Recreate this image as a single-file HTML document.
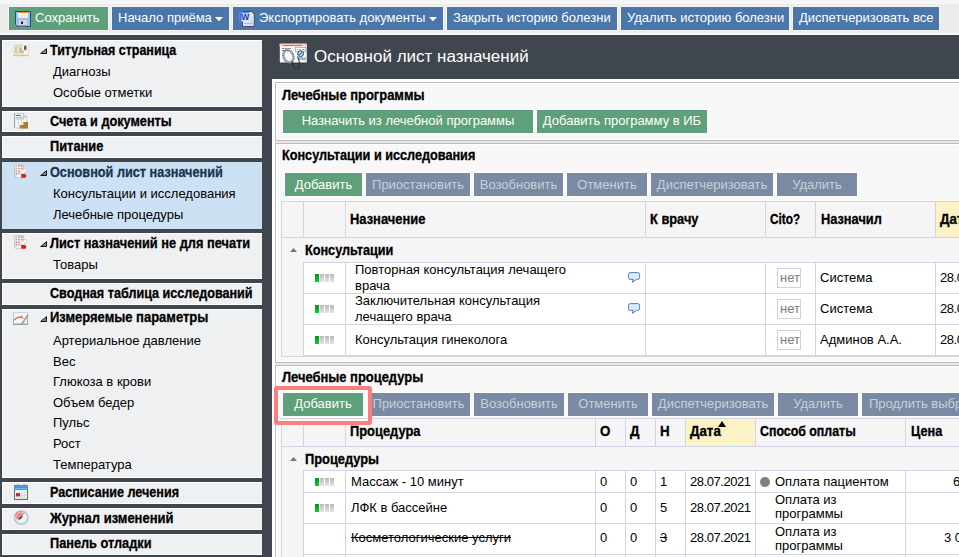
<!DOCTYPE html><html><head><meta charset="utf-8"><style>
html,body{margin:0;padding:0}
body{width:959px;height:557px;overflow:hidden;position:relative;background:#3f464e;font-family:"Liberation Sans",sans-serif}
.t{position:absolute;white-space:nowrap}
.b{position:absolute}
svg{position:absolute}
</style></head><body>
<div class="b" style="left:0px;top:0px;width:959px;height:35px;background:#ececec;"></div>
<div class="b" style="left:0px;top:0px;width:959px;height:4px;background:#f6f6f6;"></div>
<div class="b" style="left:0px;top:33px;width:959px;height:2px;background:#f7f7f7;"></div>
<div class="b" style="left:8px;top:6px;width:101px;height:25px;background:#f5f5f5;"></div>
<div class="b" style="left:9px;top:7px;width:99px;height:23px;background:#5da07a;"></div>
<div class="b" style="left:111px;top:6px;width:119px;height:25px;background:#f5f5f5;"></div>
<div class="b" style="left:112px;top:7px;width:117px;height:23px;background:#4a76aa;"></div>
<div class="b" style="left:232px;top:6px;width:212px;height:25px;background:#f5f5f5;"></div>
<div class="b" style="left:233px;top:7px;width:210px;height:23px;background:#4a76aa;"></div>
<div class="b" style="left:446px;top:6px;width:172px;height:25px;background:#f5f5f5;"></div>
<div class="b" style="left:447px;top:7px;width:170px;height:23px;background:#4a76aa;"></div>
<div class="b" style="left:620px;top:6px;width:170px;height:25px;background:#f5f5f5;"></div>
<div class="b" style="left:621px;top:7px;width:168px;height:23px;background:#4a76aa;"></div>
<div class="b" style="left:792px;top:6px;width:148px;height:25px;background:#f5f5f5;"></div>
<div class="b" style="left:793px;top:7px;width:146px;height:23px;background:#4a76aa;"></div>
<div class="t" style="left:35px;top:10px;font-size:13px;line-height:15px;font-weight:normal;color:#fff;">Сохранить</div>
<div class="t" style="left:118px;top:10px;font-size:13px;line-height:15px;font-weight:normal;color:#fff;">Начало приёма</div>
<div class="t" style="left:259px;top:10px;font-size:13px;line-height:15px;font-weight:normal;color:#fff;">Экспортировать документы</div>
<div class="t" style="left:453px;top:10px;font-size:13px;line-height:15px;font-weight:normal;color:#fff;">Закрыть историю болезни</div>
<div class="t" style="left:627px;top:10px;font-size:13px;line-height:15px;font-weight:normal;color:#fff;">Удалить историю болезни</div>
<div class="t" style="left:799px;top:10px;font-size:13px;line-height:15px;font-weight:normal;color:#fff;">Диспетчеризовать все</div>
<svg style="left:215px;top:17px" width="9" height="5"><path d="M0 0 L8 0 L4 4.2 Z" fill="#fff"/></svg>
<svg style="left:429px;top:17px" width="9" height="5"><path d="M0 0 L8 0 L4 4.2 Z" fill="#fff"/></svg>
<svg style="left:15px;top:11px" width="16" height="16" viewBox="0 0 16 16">
<path d="M0.5 0.5 H15.5 V15.5 H2.5 L0.5 13.5 Z" fill="#9fc0ea" stroke="#1f4d9c" stroke-width="1"/>
<rect x="3" y="1" width="10" height="6" fill="#ececec"/>
<rect x="3" y="1" width="10" height="1.2" fill="#f28c1c"/>
<rect x="3" y="2.2" width="10" height="1.5" fill="#fafafa"/>
<rect x="4" y="9" width="8" height="6.5" fill="#d8d8d8"/>
<rect x="4" y="14.5" width="8" height="1" fill="#555"/>
<rect x="6" y="10.5" width="2" height="2.5" fill="#222"/>
</svg>
<svg style="left:239px;top:11px" width="16" height="16" viewBox="0 0 16 16">
<defs><linearGradient id="wg" x1="0" y1="0" x2="1" y2="1"><stop offset="0" stop-color="#f4f7fd"/><stop offset="1" stop-color="#c9d6f0"/></linearGradient></defs>
<path d="M3.5 0.5 H12.5 L15.3 3.3 V15.5 H3.5 Z" fill="url(#wg)" stroke="#3c4660" stroke-width="0.9"/>
<rect x="5" y="12" width="8.5" height="0.8" fill="#9fb0d0"/>
<rect x="0.3" y="1" width="10" height="9.5" fill="#d4e0fa"/>
<rect x="0.3" y="1" width="2.2" height="9.5" fill="#3a6ee8"/>
<rect x="0.3" y="1" width="10" height="1.3" fill="#5a88f0"/>
<text x="6.3" y="9.3" font-size="8.5" font-weight="bold" text-anchor="middle" fill="#1a3aa8" font-family="Liberation Sans">W</text>
</svg>
<div class="b" style="left:2px;top:40px;width:260px;height:67px;background:#ffffff;"></div>
<div class="b" style="left:3px;top:41px;width:259px;height:65px;background:#eff0f2;"></div>
<div class="b" style="left:2px;top:111px;width:260px;height:21px;background:#ffffff;"></div>
<div class="b" style="left:3px;top:112px;width:259px;height:19px;background:#eff0f2;"></div>
<div class="b" style="left:2px;top:136px;width:260px;height:22px;background:#ffffff;"></div>
<div class="b" style="left:3px;top:137px;width:259px;height:20px;background:#eff0f2;"></div>
<div class="b" style="left:2px;top:162px;width:260px;height:67px;background:#cde1f5;"></div>
<div class="b" style="left:2px;top:233px;width:260px;height:46px;background:#ffffff;"></div>
<div class="b" style="left:3px;top:234px;width:259px;height:44px;background:#eff0f2;"></div>
<div class="b" style="left:2px;top:283px;width:260px;height:22px;background:#ffffff;"></div>
<div class="b" style="left:3px;top:284px;width:259px;height:20px;background:#eff0f2;"></div>
<div class="b" style="left:2px;top:309px;width:260px;height:169px;background:#ffffff;"></div>
<div class="b" style="left:3px;top:310px;width:259px;height:167px;background:#eff0f2;"></div>
<div class="b" style="left:2px;top:482px;width:260px;height:22px;background:#ffffff;"></div>
<div class="b" style="left:3px;top:483px;width:259px;height:20px;background:#eff0f2;"></div>
<div class="b" style="left:2px;top:508px;width:260px;height:22px;background:#ffffff;"></div>
<div class="b" style="left:3px;top:509px;width:259px;height:20px;background:#eff0f2;"></div>
<div class="b" style="left:2px;top:534px;width:260px;height:21px;background:#ffffff;"></div>
<div class="b" style="left:3px;top:535px;width:259px;height:19px;background:#eff0f2;"></div>
<div class="t" style="left:50px;top:43px;font-size:14px;line-height:15px;font-weight:bold;color:#000;transform:scaleX(0.8905);transform-origin:0 0;-webkit-text-stroke:0.3px #000;">Титульная страница</div>
<svg style="left:40px;top:48px" width="8" height="7"><path d="M6.5 0.7 L6.5 5.5 L0.7 5.5 Z" fill="#8a8a8a" stroke="#111" stroke-width="1" stroke-linejoin="round"/></svg>
<div class="t" style="left:53px;top:64px;font-size:13px;line-height:15px;font-weight:normal;color:#000;">Диагнозы</div>
<div class="t" style="left:53px;top:85px;font-size:13px;line-height:15px;font-weight:normal;color:#000;">Особые отметки</div>
<div class="t" style="left:50px;top:114px;font-size:14px;line-height:15px;font-weight:bold;color:#000;transform:scaleX(0.9065);transform-origin:0 0;-webkit-text-stroke:0.3px #000;">Счета и документы</div>
<div class="t" style="left:50px;top:139px;font-size:14px;line-height:15px;font-weight:bold;color:#000;transform:scaleX(0.9164);transform-origin:0 0;-webkit-text-stroke:0.3px #000;">Питание</div>
<div class="t" style="left:50px;top:165px;font-size:14px;line-height:15px;font-weight:bold;color:#1b3550;transform:scaleX(0.9063);transform-origin:0 0;-webkit-text-stroke:0.3px #1b3550;">Основной лист назначений</div>
<svg style="left:40px;top:170px" width="8" height="7"><path d="M6.5 0.7 L6.5 5.5 L0.7 5.5 Z" fill="#8a8a8a" stroke="#111" stroke-width="1" stroke-linejoin="round"/></svg>
<div class="t" style="left:53px;top:186px;font-size:13px;line-height:15px;font-weight:normal;color:#000;">Консультации и исследования</div>
<div class="t" style="left:53px;top:207px;font-size:13px;line-height:15px;font-weight:normal;color:#000;">Лечебные процедуры</div>
<div class="t" style="left:50px;top:236px;font-size:14px;line-height:15px;font-weight:bold;color:#000;transform:scaleX(0.9144);transform-origin:0 0;-webkit-text-stroke:0.3px #000;">Лист назначений не для печати</div>
<svg style="left:40px;top:241px" width="8" height="7"><path d="M6.5 0.7 L6.5 5.5 L0.7 5.5 Z" fill="#8a8a8a" stroke="#111" stroke-width="1" stroke-linejoin="round"/></svg>
<div class="t" style="left:53px;top:257px;font-size:13px;line-height:15px;font-weight:normal;color:#000;">Товары</div>
<div class="t" style="left:50px;top:286px;font-size:14px;line-height:15px;font-weight:bold;color:#000;transform:scaleX(0.9006);transform-origin:0 0;-webkit-text-stroke:0.3px #000;">Сводная таблица исследований</div>
<div class="t" style="left:50px;top:310px;font-size:14px;line-height:15px;font-weight:bold;color:#000;transform:scaleX(0.9266);transform-origin:0 0;-webkit-text-stroke:0.3px #000;">Измеряемые параметры</div>
<svg style="left:40px;top:316px" width="8" height="7"><path d="M6.5 0.7 L6.5 5.5 L0.7 5.5 Z" fill="#8a8a8a" stroke="#111" stroke-width="1" stroke-linejoin="round"/></svg>
<div class="t" style="left:53px;top:333px;font-size:13px;line-height:15px;font-weight:normal;color:#000;">Артериальное давление</div>
<div class="t" style="left:53px;top:354px;font-size:13px;line-height:15px;font-weight:normal;color:#000;">Вес</div>
<div class="t" style="left:53px;top:374px;font-size:13px;line-height:15px;font-weight:normal;color:#000;">Глюкоза в крови</div>
<div class="t" style="left:53px;top:395px;font-size:13px;line-height:15px;font-weight:normal;color:#000;">Объем бедер</div>
<div class="t" style="left:53px;top:415px;font-size:13px;line-height:15px;font-weight:normal;color:#000;">Пульс</div>
<div class="t" style="left:53px;top:436px;font-size:13px;line-height:15px;font-weight:normal;color:#000;">Рост</div>
<div class="t" style="left:53px;top:457px;font-size:13px;line-height:15px;font-weight:normal;color:#000;">Температура</div>
<div class="t" style="left:50px;top:485px;font-size:14px;line-height:15px;font-weight:bold;color:#000;transform:scaleX(0.8986);transform-origin:0 0;-webkit-text-stroke:0.3px #000;">Расписание лечения</div>
<div class="t" style="left:50px;top:511px;font-size:14px;line-height:15px;font-weight:bold;color:#000;transform:scaleX(0.9279);transform-origin:0 0;-webkit-text-stroke:0.3px #000;">Журнал изменений</div>
<div class="t" style="left:50px;top:536px;font-size:14px;line-height:15px;font-weight:bold;color:#000;transform:scaleX(0.9100);transform-origin:0 0;-webkit-text-stroke:0.3px #000;">Панель отладки</div>
<svg style="left:13px;top:44px" width="16" height="13" viewBox="0 0 16 13">
<rect x="0.3" y="0.5" width="15.4" height="11.5" fill="#efe3bf"/>
<rect x="0.3" y="11" width="15.4" height="1.2" fill="#cfc5a8"/>
<rect x="2" y="1.2" width="7" height="1" fill="#c5cdb0"/>
<rect x="2" y="3.5" width="2" height="1" fill="#9fb5ae"/><rect x="2" y="5.5" width="1.5" height="1" fill="#9fb5ae"/><rect x="2" y="7.5" width="2" height="1.2" fill="#9fb5ae"/>
<rect x="6.5" y="3.5" width="2" height="5.5" fill="#a9bdb3"/><rect x="8.5" y="7" width="2" height="2" fill="#a9bdb3"/>
<rect x="9.5" y="0" width="5.5" height="6.5" fill="#fbfbfb" stroke="#d0d0d0" stroke-width="0.5"/>
<rect x="11" y="1.5" width="2.5" height="4.5" rx="1" fill="#5a5a5a"/>
<rect x="11" y="7.5" width="4" height="2.5" fill="#fff6dc"/>
</svg>
<svg style="left:14px;top:113px" width="15" height="16" viewBox="0 0 15 16">
<path d="M0.5 0.5 H9.5 L12.5 3.5 V15 H0.5 Z" fill="#f2f7f7" stroke="#b9c6c6" stroke-width="0.8"/>
<rect x="0.2" y="0.3" width="0.9" height="14.5" fill="#8d9d9d"/>
<path d="M9.5 0.5 V3.5 H12.5" fill="none" stroke="#9aa" stroke-width="0.7"/>
<rect x="2" y="2" width="5" height="0.9" fill="#555"/>
<rect x="2" y="4.2" width="8.5" height="0.7" fill="#9aa"/><rect x="2" y="5.6" width="8.5" height="0.7" fill="#9aa"/>
<rect x="4" y="7" width="0.7" height="7" fill="#c3d0d0"/><rect x="7" y="7" width="0.7" height="7" fill="#c3d0d0"/>
<path d="M5.8 15.6 V12 H9.3 V9 H14 V15.6 Z" fill="#a97d30"/>
</svg>
<svg style="left:14px;top:164px" width="14" height="15" viewBox="0 0 14 15">
<rect x="0.5" y="0.3" width="9" height="13" rx="1.5" fill="#f2f2f2" stroke="#b8b8b8" stroke-width="0.7"/>
<g fill="#e88a7c"><circle cx="5" cy="2" r="0.95"/><circle cx="7.8" cy="2" r="0.95"/><circle cx="5" cy="4.6" r="0.95"/><circle cx="7.8" cy="4.6" r="0.95"/><circle cx="5" cy="7.2" r="0.95"/><circle cx="2.3" cy="7.2" r="0.95"/><circle cx="2.3" cy="9.8" r="0.95"/><circle cx="5" cy="9.8" r="0.95"/></g>
<g fill="#aab4c0"><circle cx="2.3" cy="2" r="0.8"/><circle cx="2.3" cy="4.6" r="0.8"/></g>
<path d="M6.8 10.5 L11.2 5.8" stroke="#b8b8b8" stroke-width="3.6" stroke-linecap="round"/>
<path d="M6.8 10.5 L11.2 5.8" stroke="#fafafa" stroke-width="2.6" stroke-linecap="round"/>
<rect x="1.8" y="10" width="10.4" height="3.8" rx="1.9" fill="#f6f6f6" stroke="#a8a8a8" stroke-width="0.5"/>
<path d="M7.2 10 H10.3 A1.9 1.9 0 0 1 10.3 13.8 H7.2 Z" fill="#d81e1a"/>
</svg>
<svg style="left:14px;top:235px" width="14" height="15" viewBox="0 0 14 15">
<rect x="0.5" y="0.3" width="9" height="13" rx="1.5" fill="#f2f2f2" stroke="#b8b8b8" stroke-width="0.7"/>
<g fill="#e88a7c"><circle cx="5" cy="2" r="0.95"/><circle cx="7.8" cy="2" r="0.95"/><circle cx="5" cy="4.6" r="0.95"/><circle cx="7.8" cy="4.6" r="0.95"/><circle cx="5" cy="7.2" r="0.95"/><circle cx="2.3" cy="7.2" r="0.95"/><circle cx="2.3" cy="9.8" r="0.95"/><circle cx="5" cy="9.8" r="0.95"/></g>
<g fill="#aab4c0"><circle cx="2.3" cy="2" r="0.8"/><circle cx="2.3" cy="4.6" r="0.8"/></g>
<path d="M6.8 10.5 L11.2 5.8" stroke="#b8b8b8" stroke-width="3.6" stroke-linecap="round"/>
<path d="M6.8 10.5 L11.2 5.8" stroke="#fafafa" stroke-width="2.6" stroke-linecap="round"/>
<rect x="1.8" y="10" width="10.4" height="3.8" rx="1.9" fill="#f6f6f6" stroke="#a8a8a8" stroke-width="0.5"/>
<path d="M7.2 10 H10.3 A1.9 1.9 0 0 1 10.3 13.8 H7.2 Z" fill="#d81e1a"/>
</svg>
<svg style="left:13px;top:312px" width="16" height="14" viewBox="0 0 16 14">
<defs><linearGradient id="cg" x1="0" y1="0" x2="0" y2="1"><stop offset="0" stop-color="#c9d6dc"/><stop offset="1" stop-color="#8fa2ac"/></linearGradient></defs>
<rect x="0" y="0" width="15" height="13" fill="url(#cg)"/>
<rect x="1" y="1" width="13" height="10.5" fill="#f2f6f7"/>
<path d="M1.5 8 L3 6.5 L5 5.2 L7 5.6 L8.5 4.2 L9.8 6.8" stroke="#f0623c" stroke-width="1.2" fill="none"/>
<path d="M8.5 12.5 L15 3" stroke="#8f949c" stroke-width="1.8"/>
<path d="M9 12 L14.2 4.3" stroke="#f0b0b0" stroke-width="0.6"/>
<circle cx="12.2" cy="8.3" r="0.8" fill="#f2d060"/>
</svg>
<svg style="left:14px;top:484px" width="15" height="16" viewBox="0 0 15 16">
<rect x="0.5" y="1.5" width="13" height="14" fill="#e8f3f3" stroke="#6d5853" stroke-width="0.9"/>
<rect x="0" y="1" width="14" height="5" fill="#3a9ae6"/>
<rect x="1" y="4" width="12" height="1" fill="#6cb8f0"/>
<rect x="3" y="0" width="1.6" height="3.5" rx="0.8" fill="#8a8a8a"/><rect x="9.5" y="0" width="1.6" height="3.5" rx="0.8" fill="#8a8a8a"/>
<g fill="#c9d5d5"><rect x="7" y="7" width="0.8" height="7.5"/><rect x="10.5" y="7" width="0.8" height="7.5"/><rect x="1.5" y="11" width="11" height="0.8"/><rect x="1.5" y="13.5" width="11" height="0.6"/></g>
<rect x="2" y="9" width="4" height="3.4" fill="#e02424"/>
</svg>
<svg style="left:13px;top:510px" width="17" height="16" viewBox="0 0 17 16">
<circle cx="8.2" cy="7.6" r="6.6" fill="#e9f2f6" stroke="#a4aeb6" stroke-width="1.6" stroke-dasharray="1.1 0.6"/>
<path d="M8.4 7.4 L3.2 9.6 A5.2 5.2 0 0 1 11.2 2.9 Z" fill="#f68484"/>
<circle cx="8.2" cy="7.6" r="5.4" fill="none" stroke="#d8e2e8" stroke-width="0.7"/>
<path d="M9.4 6.6 L5.6 9.6" stroke="#2e2e2e" stroke-width="1.3"/>
</svg>
<div class="t" style="left:314px;top:47px;font-size:17px;line-height:19px;font-weight:normal;color:#fff;">Основной лист назначений</div>
<svg style="left:279px;top:43px" width="30" height="28" viewBox="0 0 30 28">
<rect x="0.3" y="0.3" width="27.8" height="19.6" fill="#f6f8fa" stroke="#262626" stroke-width="0.6"/>
<rect x="0.6" y="0.6" width="27.2" height="2.7" fill="#fbcac3"/>
<rect x="4.3" y="2.1" width="18.7" height="0.9" fill="#a8705c"/>
<g fill="#555"><rect x="3.2" y="5.2" width="2" height="0.8"/><rect x="5.8" y="5.2" width="2" height="0.8"/><rect x="8.5" y="5.2" width="1.5" height="0.8"/><rect x="10.5" y="5.2" width="1.5" height="0.8"/><rect x="3.2" y="7.2" width="7" height="0.8"/></g>
<rect x="16.3" y="4.5" width="10.5" height="4" fill="#fff" stroke="#888" stroke-width="0.6"/>
<g fill="#666"><rect x="18" y="6.2" width="1.3" height="0.7"/><rect x="20.5" y="6.2" width="1.3" height="0.7"/><rect x="23" y="6.2" width="2.5" height="0.7"/></g>
<path d="M18.5 14 L27 14 L27 17.2 L18.5 17.2 Z" fill="#a9cbea"/>
<g fill="#4a86c4"><rect x="19" y="15.6" width="2" height="0.8"/><rect x="22" y="15" width="1.5" height="0.8"/><rect x="24" y="16" width="2" height="0.8"/></g>
<ellipse cx="9.4" cy="13.3" rx="4.8" ry="6.3" transform="rotate(-25 9.4 13.3)" fill="none" stroke="#7c8c96" stroke-width="2.4" stroke-dasharray="1.5 0.4"/>
<path d="M13 18.3 Q14.5 26.5 17.5 26 Q21 25 20.7 21.6 Q20.2 17 18.5 13.5" stroke="#2a2a2a" stroke-width="1" fill="none"/>
<circle cx="21.6" cy="10.6" r="2.9" fill="#d6e6f2" stroke="#333" stroke-width="1"/>
<path d="M20 11.8 L23.2 9.2" stroke="#2f6aa8" stroke-width="1.2"/>
</svg>
<div class="b" style="left:272px;top:79px;width:700px;height:500px;background:#ffffff;"></div>
<div class="b" style="left:275px;top:82px;width:700px;height:59px;background:#f8f8f8;border:1px solid #bcbcbc;box-sizing:border-box;box-shadow:inset 0 0 0 1px #fff;"></div>
<div class="b" style="left:275px;top:141px;width:700px;height:2px;background:#e9e9e9;"></div>
<div class="b" style="left:275px;top:143px;width:700px;height:220px;background:#f8f8f8;border:1px solid #bcbcbc;box-sizing:border-box;box-shadow:inset 0 0 0 1px #fff;"></div>
<div class="b" style="left:275px;top:363px;width:700px;height:2px;background:#e9e9e9;"></div>
<div class="b" style="left:275px;top:365px;width:700px;height:220px;background:#f8f8f8;border:1px solid #bcbcbc;box-sizing:border-box;box-shadow:inset 0 0 0 1px #fff;"></div>
<div class="t" style="left:282px;top:88px;font-size:14px;line-height:15px;font-weight:bold;color:#000;transform:scaleX(0.9252);transform-origin:0 0;-webkit-text-stroke:0.3px #000;">Лечебные программы</div>
<div class="b" style="left:283px;top:110px;width:250px;height:23px;background:#5da07a;box-shadow:0 0 0 1px #fff"></div>
<div class="t" style="left:283px;top:113px;width:250px;text-align:center;font-size:13px;line-height:15px;color:#fff">Назначить из лечебной программы</div>
<div class="b" style="left:537px;top:110px;width:170px;height:23px;background:#5da07a;box-shadow:0 0 0 1px #fff"></div>
<div class="t" style="left:537px;top:113px;width:170px;text-align:center;font-size:13px;line-height:15px;color:#fff">Добавить программу в ИБ</div>
<div class="t" style="left:282px;top:148px;font-size:14px;line-height:15px;font-weight:bold;color:#000;transform:scaleX(0.9049);transform-origin:0 0;-webkit-text-stroke:0.3px #000;">Консультации и исследования</div>
<div class="b" style="left:285px;top:173px;width:77px;height:23px;background:#5da07a;box-shadow:0 0 0 1px #fff"></div>
<div class="t" style="left:285px;top:177px;width:77px;text-align:center;font-size:13px;line-height:15px;color:#fff">Добавить</div>
<div class="b" style="left:366px;top:173px;width:104px;height:23px;background:#7a8aa2;box-shadow:0 0 0 1px #fff"></div>
<div class="t" style="left:366px;top:177px;width:104px;text-align:center;font-size:13px;line-height:15px;color:#c9cfd8">Приостановить</div>
<div class="b" style="left:474px;top:173px;width:89px;height:23px;background:#7a8aa2;box-shadow:0 0 0 1px #fff"></div>
<div class="t" style="left:474px;top:177px;width:89px;text-align:center;font-size:13px;line-height:15px;color:#c9cfd8">Возобновить</div>
<div class="b" style="left:567px;top:173px;width:80px;height:23px;background:#7a8aa2;box-shadow:0 0 0 1px #fff"></div>
<div class="t" style="left:567px;top:177px;width:80px;text-align:center;font-size:13px;line-height:15px;color:#c9cfd8">Отменить</div>
<div class="b" style="left:651px;top:173px;width:122px;height:23px;background:#7a8aa2;box-shadow:0 0 0 1px #fff"></div>
<div class="t" style="left:651px;top:177px;width:122px;text-align:center;font-size:13px;line-height:15px;color:#c9cfd8">Диспетчеризовать</div>
<div class="b" style="left:777px;top:173px;width:80px;height:23px;background:#7a8aa2;box-shadow:0 0 0 1px #fff"></div>
<div class="t" style="left:777px;top:177px;width:80px;text-align:center;font-size:13px;line-height:15px;color:#c9cfd8">Удалить</div>
<div class="b" style="left:281px;top:201px;width:700px;height:37px;background:#f5f5f5;border-top:1px solid #d2d5e3;border-bottom:1px solid #d2d5e3;border-left:1px solid #d2d5e3;box-sizing:border-box;"></div>
<div class="b" style="left:936px;top:202px;width:44px;height:35px;background:#fbf3c6;"></div>
<div class="b" style="left:303px;top:201px;width:1px;height:37px;background:#d2d5e3;"></div>
<div class="b" style="left:345px;top:201px;width:1px;height:37px;background:#d2d5e3;"></div>
<div class="b" style="left:645px;top:201px;width:1px;height:37px;background:#d2d5e3;"></div>
<div class="b" style="left:765px;top:201px;width:1px;height:37px;background:#d2d5e3;"></div>
<div class="b" style="left:815px;top:201px;width:1px;height:37px;background:#d2d5e3;"></div>
<div class="b" style="left:935px;top:201px;width:1px;height:37px;background:#d2d5e3;"></div>
<div class="t" style="left:350px;top:212px;font-size:14px;line-height:15px;font-weight:bold;color:#000;transform:scaleX(0.9231);transform-origin:0 0;-webkit-text-stroke:0.3px #000;">Назначение</div>
<div class="t" style="left:650px;top:212px;font-size:14px;line-height:15px;font-weight:bold;color:#000;transform:scaleX(0.9161);transform-origin:0 0;-webkit-text-stroke:0.3px #000;">К врачу</div>
<div class="t" style="left:770px;top:212px;font-size:14px;line-height:15px;font-weight:bold;color:#000;transform:scaleX(0.8416);transform-origin:0 0;-webkit-text-stroke:0.3px #000;">Cito?</div>
<div class="t" style="left:821px;top:212px;font-size:14px;line-height:15px;font-weight:bold;color:#000;transform:scaleX(0.9136);transform-origin:0 0;-webkit-text-stroke:0.3px #000;">Назначил</div>
<div class="t" style="left:940px;top:212px;font-size:14px;line-height:15px;font-weight:bold;color:#000;transform:scaleX(0.9500);transform-origin:0 0;-webkit-text-stroke:0.3px #000;">Дата</div>
<div class="b" style="left:281px;top:238px;width:700px;height:118px;background:#f5f5f5;border-left:1px solid #d2d5e3;box-sizing:border-box;"></div>
<svg style="left:290px;top:248px" width="7" height="4"><path d="M0 4 L3.5 0 L7 4 Z" fill="#777"/></svg>
<div class="t" style="left:305px;top:243px;font-size:14px;line-height:15px;font-weight:bold;color:#000;transform:scaleX(0.9040);transform-origin:0 0;-webkit-text-stroke:0.3px #000;">Консультации</div>
<div class="b" style="left:303px;top:262px;width:700px;height:94px;background:#ffffff;"></div>
<div class="b" style="left:303px;top:262px;width:700px;height:1px;background:#d2d5e3;"></div>
<div class="b" style="left:303px;top:293px;width:700px;height:1px;background:#d2d5e3;"></div>
<div class="b" style="left:303px;top:324px;width:700px;height:1px;background:#d2d5e3;"></div>
<div class="b" style="left:303px;top:355px;width:700px;height:1px;background:#d2d5e3;"></div>
<div class="b" style="left:281px;top:356px;width:700px;height:1px;background:#d2d5e3;"></div>
<div class="b" style="left:303px;top:262px;width:1px;height:94px;background:#d2d5e3;"></div>
<div class="b" style="left:345px;top:262px;width:1px;height:94px;background:#d2d5e3;"></div>
<div class="b" style="left:645px;top:262px;width:1px;height:94px;background:#d2d5e3;"></div>
<div class="b" style="left:765px;top:262px;width:1px;height:94px;background:#d2d5e3;"></div>
<div class="b" style="left:815px;top:262px;width:1px;height:94px;background:#d2d5e3;"></div>
<div class="b" style="left:935px;top:262px;width:1px;height:94px;background:#d2d5e3;"></div>
<div class="b" style="left:315px;top:274px;width:4px;height:8px;background:linear-gradient(#07901f,#00d430)"></div>
<div class="b" style="left:320px;top:274px;width:4px;height:8px;background:linear-gradient(#b9b9b9,#e4e4e4)"></div>
<div class="b" style="left:325px;top:274px;width:4px;height:8px;background:linear-gradient(#b9b9b9,#e4e4e4)"></div>
<div class="b" style="left:330px;top:274px;width:4px;height:8px;background:linear-gradient(#b9b9b9,#e4e4e4)"></div>
<div class="b" style="left:777px;top:268px;width:22px;height:18px;border:1px solid #d2d2d2;background:#fff"></div>
<div class="t" style="left:780px;top:270px;font-size:13px;line-height:15px;font-weight:normal;color:#7c7c7c;">нет</div>
<div class="t" style="left:940px;top:270px;font-size:13px;line-height:15px;font-weight:normal;color:#000;letter-spacing:-0.45px">28.07.2021</div>
<div class="b" style="left:315px;top:305px;width:4px;height:8px;background:linear-gradient(#07901f,#00d430)"></div>
<div class="b" style="left:320px;top:305px;width:4px;height:8px;background:linear-gradient(#b9b9b9,#e4e4e4)"></div>
<div class="b" style="left:325px;top:305px;width:4px;height:8px;background:linear-gradient(#b9b9b9,#e4e4e4)"></div>
<div class="b" style="left:330px;top:305px;width:4px;height:8px;background:linear-gradient(#b9b9b9,#e4e4e4)"></div>
<div class="b" style="left:777px;top:299px;width:22px;height:18px;border:1px solid #d2d2d2;background:#fff"></div>
<div class="t" style="left:780px;top:301px;font-size:13px;line-height:15px;font-weight:normal;color:#7c7c7c;">нет</div>
<div class="t" style="left:940px;top:301px;font-size:13px;line-height:15px;font-weight:normal;color:#000;letter-spacing:-0.45px">28.07.2021</div>
<div class="b" style="left:315px;top:336px;width:4px;height:8px;background:linear-gradient(#07901f,#00d430)"></div>
<div class="b" style="left:320px;top:336px;width:4px;height:8px;background:linear-gradient(#b9b9b9,#e4e4e4)"></div>
<div class="b" style="left:325px;top:336px;width:4px;height:8px;background:linear-gradient(#b9b9b9,#e4e4e4)"></div>
<div class="b" style="left:330px;top:336px;width:4px;height:8px;background:linear-gradient(#b9b9b9,#e4e4e4)"></div>
<div class="b" style="left:777px;top:330px;width:22px;height:18px;border:1px solid #d2d2d2;background:#fff"></div>
<div class="t" style="left:780px;top:332px;font-size:13px;line-height:15px;font-weight:normal;color:#7c7c7c;">нет</div>
<div class="t" style="left:940px;top:332px;font-size:13px;line-height:15px;font-weight:normal;color:#000;letter-spacing:-0.45px">28.07.2021</div>
<div class="t" style="left:355px;top:262px;font-size:13px;line-height:15px;font-weight:normal;color:#000;">Повторная консультация лечащего</div>
<div class="t" style="left:355px;top:278px;font-size:13px;line-height:15px;font-weight:normal;color:#000;">врача</div>
<div class="t" style="left:355px;top:293px;font-size:13px;line-height:15px;font-weight:normal;color:#000;">Заключительная консультация</div>
<div class="t" style="left:355px;top:309px;font-size:13px;line-height:15px;font-weight:normal;color:#000;">лечащего врача</div>
<div class="t" style="left:355px;top:332px;font-size:13px;line-height:15px;font-weight:normal;color:#000;">Консультация гинеколога</div>
<div class="t" style="left:820px;top:270px;font-size:13px;line-height:15px;font-weight:normal;color:#000;">Система</div>
<div class="t" style="left:820px;top:301px;font-size:13px;line-height:15px;font-weight:normal;color:#000;">Система</div>
<div class="t" style="left:820px;top:332px;font-size:13px;line-height:15px;font-weight:normal;color:#000;">Админов А.А.</div>
<svg style="left:628px;top:272px" width="13" height="12" viewBox="0 0 13 12"><path d="M2.2 0.6 H9.8 Q11.6 0.6 11.6 2.4 V5.6 Q11.6 7.4 9.8 7.4 H8.5 L4.3 10.3 L5.2 7.4 H2.2 Q0.5 7.4 0.5 5.6 V2.4 Q0.5 0.6 2.2 0.6 Z" fill="#dbe9fb" stroke="#4f80bd" stroke-width="1"/></svg>
<svg style="left:628px;top:303px" width="13" height="12" viewBox="0 0 13 12"><path d="M2.2 0.6 H9.8 Q11.6 0.6 11.6 2.4 V5.6 Q11.6 7.4 9.8 7.4 H8.5 L4.3 10.3 L5.2 7.4 H2.2 Q0.5 7.4 0.5 5.6 V2.4 Q0.5 0.6 2.2 0.6 Z" fill="#dbe9fb" stroke="#4f80bd" stroke-width="1"/></svg>
<div class="t" style="left:282px;top:370px;font-size:14px;line-height:15px;font-weight:bold;color:#000;transform:scaleX(0.9238);transform-origin:0 0;-webkit-text-stroke:0.3px #000;">Лечебные процедуры</div>
<div class="b" style="left:283px;top:393px;width:80px;height:23px;background:#5da07a;box-shadow:0 0 0 1px #fff"></div>
<div class="t" style="left:283px;top:396px;width:80px;text-align:center;font-size:13px;line-height:15px;color:#fff">Добавить</div>
<div class="b" style="left:367px;top:393px;width:103px;height:23px;background:#7a8aa2;box-shadow:0 0 0 1px #fff"></div>
<div class="t" style="left:367px;top:396px;width:103px;text-align:center;font-size:13px;line-height:15px;color:#c9cfd8">Приостановить</div>
<div class="b" style="left:474px;top:393px;width:90px;height:23px;background:#7a8aa2;box-shadow:0 0 0 1px #fff"></div>
<div class="t" style="left:474px;top:396px;width:90px;text-align:center;font-size:13px;line-height:15px;color:#c9cfd8">Возобновить</div>
<div class="b" style="left:568px;top:393px;width:80px;height:23px;background:#7a8aa2;box-shadow:0 0 0 1px #fff"></div>
<div class="t" style="left:568px;top:396px;width:80px;text-align:center;font-size:13px;line-height:15px;color:#c9cfd8">Отменить</div>
<div class="b" style="left:652px;top:393px;width:122px;height:23px;background:#7a8aa2;box-shadow:0 0 0 1px #fff"></div>
<div class="t" style="left:652px;top:396px;width:122px;text-align:center;font-size:13px;line-height:15px;color:#c9cfd8">Диспетчеризовать</div>
<div class="b" style="left:778px;top:393px;width:80px;height:23px;background:#7a8aa2;box-shadow:0 0 0 1px #fff"></div>
<div class="t" style="left:778px;top:396px;width:80px;text-align:center;font-size:13px;line-height:15px;color:#c9cfd8">Удалить</div>
<div class="b" style="left:862px;top:393px;width:150px;height:23px;background:#7a8aa2;box-shadow:0 0 0 1px #fff"></div>
<div class="t" style="left:869px;top:396px;font-size:13px;line-height:15px;font-weight:normal;color:#c9cfd8;">Продлить выбранные</div>
<div class="b" style="left:281px;top:418px;width:700px;height:29px;background:#f5f5f5;border-top:1px solid #d2d5e3;border-bottom:1px solid #d2d5e3;border-left:1px solid #d2d5e3;box-sizing:border-box;"></div>
<div class="b" style="left:686px;top:419px;width:69px;height:27px;background:#fbf3c6;"></div>
<div class="b" style="left:303px;top:418px;width:1px;height:29px;background:#d2d5e3;"></div>
<div class="b" style="left:345px;top:418px;width:1px;height:29px;background:#d2d5e3;"></div>
<div class="b" style="left:595px;top:418px;width:1px;height:29px;background:#d2d5e3;"></div>
<div class="b" style="left:625px;top:418px;width:1px;height:29px;background:#d2d5e3;"></div>
<div class="b" style="left:655px;top:418px;width:1px;height:29px;background:#d2d5e3;"></div>
<div class="b" style="left:685px;top:418px;width:1px;height:29px;background:#d2d5e3;"></div>
<div class="b" style="left:755px;top:418px;width:1px;height:29px;background:#d2d5e3;"></div>
<div class="b" style="left:905px;top:418px;width:1px;height:29px;background:#d2d5e3;"></div>
<div class="t" style="left:350px;top:424px;font-size:14px;line-height:15px;font-weight:bold;color:#000;transform:scaleX(0.9196);transform-origin:0 0;-webkit-text-stroke:0.3px #000;">Процедура</div>
<div class="t" style="left:600px;top:424px;font-size:14px;line-height:15px;font-weight:bold;color:#000;transform:scaleX(0.9500);transform-origin:0 0;-webkit-text-stroke:0.3px #000;">О</div>
<div class="t" style="left:630px;top:424px;font-size:14px;line-height:15px;font-weight:bold;color:#000;transform:scaleX(0.9500);transform-origin:0 0;-webkit-text-stroke:0.3px #000;">Д</div>
<div class="t" style="left:660px;top:424px;font-size:14px;line-height:15px;font-weight:bold;color:#000;transform:scaleX(0.9500);transform-origin:0 0;-webkit-text-stroke:0.3px #000;">Н</div>
<div class="t" style="left:690px;top:424px;font-size:14px;line-height:15px;font-weight:bold;color:#000;transform:scaleX(0.9500);transform-origin:0 0;-webkit-text-stroke:0.3px #000;">Дата</div>
<div class="t" style="left:760px;top:424px;font-size:14px;line-height:15px;font-weight:bold;color:#000;transform:scaleX(0.8836);transform-origin:0 0;-webkit-text-stroke:0.3px #000;">Способ оплаты</div>
<div class="t" style="left:911px;top:424px;font-size:14px;line-height:15px;font-weight:bold;color:#000;transform:scaleX(0.9092);transform-origin:0 0;-webkit-text-stroke:0.3px #000;">Цена</div>
<div class="b" style="left:281px;top:447px;width:700px;height:123px;background:#f5f5f5;border-left:1px solid #d2d5e3;box-sizing:border-box;"></div>
<svg style="left:290px;top:457px" width="7" height="4"><path d="M0 4 L3.5 0 L7 4 Z" fill="#777"/></svg>
<div class="t" style="left:305px;top:452px;font-size:14px;line-height:15px;font-weight:bold;color:#000;transform:scaleX(0.9179);transform-origin:0 0;-webkit-text-stroke:0.3px #000;">Процедуры</div>
<svg style="left:718px;top:421px" width="8" height="6"><path d="M0 6 L4 0 L8 6 Z" fill="#000"/></svg>
<div class="b" style="left:303px;top:470px;width:700px;height:100px;background:#ffffff;"></div>
<div class="b" style="left:303px;top:470px;width:700px;height:1px;background:#d2d5e3;"></div>
<div class="b" style="left:303px;top:492px;width:700px;height:1px;background:#d2d5e3;"></div>
<div class="b" style="left:303px;top:523px;width:700px;height:1px;background:#d2d5e3;"></div>
<div class="b" style="left:303px;top:554px;width:700px;height:1px;background:#d2d5e3;"></div>
<div class="b" style="left:303px;top:470px;width:1px;height:100px;background:#d2d5e3;"></div>
<div class="b" style="left:345px;top:470px;width:1px;height:100px;background:#d2d5e3;"></div>
<div class="b" style="left:595px;top:470px;width:1px;height:100px;background:#d2d5e3;"></div>
<div class="b" style="left:625px;top:470px;width:1px;height:100px;background:#d2d5e3;"></div>
<div class="b" style="left:655px;top:470px;width:1px;height:100px;background:#d2d5e3;"></div>
<div class="b" style="left:685px;top:470px;width:1px;height:100px;background:#d2d5e3;"></div>
<div class="b" style="left:755px;top:470px;width:1px;height:100px;background:#d2d5e3;"></div>
<div class="b" style="left:905px;top:470px;width:1px;height:100px;background:#d2d5e3;"></div>
<div class="b" style="left:315px;top:478px;width:4px;height:8px;background:linear-gradient(#07901f,#00d430)"></div>
<div class="b" style="left:320px;top:478px;width:4px;height:8px;background:linear-gradient(#b9b9b9,#e4e4e4)"></div>
<div class="b" style="left:325px;top:478px;width:4px;height:8px;background:linear-gradient(#b9b9b9,#e4e4e4)"></div>
<div class="b" style="left:330px;top:478px;width:4px;height:8px;background:linear-gradient(#b9b9b9,#e4e4e4)"></div>
<div class="b" style="left:315px;top:504px;width:4px;height:8px;background:linear-gradient(#07901f,#00d430)"></div>
<div class="b" style="left:320px;top:504px;width:4px;height:8px;background:linear-gradient(#b9b9b9,#e4e4e4)"></div>
<div class="b" style="left:325px;top:504px;width:4px;height:8px;background:linear-gradient(#b9b9b9,#e4e4e4)"></div>
<div class="b" style="left:330px;top:504px;width:4px;height:8px;background:linear-gradient(#b9b9b9,#e4e4e4)"></div>
<div class="t" style="left:351px;top:474px;font-size:13px;line-height:15px;font-weight:normal;color:#000;">Массаж - 10 минут</div>
<div class="t" style="left:351px;top:500px;font-size:13px;line-height:15px;font-weight:normal;color:#000;">ЛФК в бассейне</div>
<div class="t" style="left:351px;top:530px;font-size:13px;line-height:15px;font-weight:normal;color:#000;text-decoration:line-through">Косметологические услуги</div>
<div class="t" style="left:600px;top:474px;font-size:13px;line-height:15px;font-weight:normal;color:#000;">0</div>
<div class="t" style="left:630px;top:474px;font-size:13px;line-height:15px;font-weight:normal;color:#000;">0</div>
<div class="t" style="left:660px;top:474px;font-size:13px;line-height:15px;font-weight:normal;color:#000;">1</div>
<div class="t" style="left:690px;top:474px;font-size:13px;line-height:15px;font-weight:normal;color:#000;letter-spacing:-0.45px">28.07.2021</div>
<div class="t" style="left:600px;top:500px;font-size:13px;line-height:15px;font-weight:normal;color:#000;">0</div>
<div class="t" style="left:630px;top:500px;font-size:13px;line-height:15px;font-weight:normal;color:#000;">0</div>
<div class="t" style="left:660px;top:500px;font-size:13px;line-height:15px;font-weight:normal;color:#000;">5</div>
<div class="t" style="left:690px;top:500px;font-size:13px;line-height:15px;font-weight:normal;color:#000;letter-spacing:-0.45px">28.07.2021</div>
<div class="t" style="left:600px;top:530px;font-size:13px;line-height:15px;font-weight:normal;color:#000;">0</div>
<div class="t" style="left:630px;top:530px;font-size:13px;line-height:15px;font-weight:normal;color:#000;">0</div>
<div class="t" style="left:660px;top:530px;font-size:13px;line-height:15px;font-weight:normal;color:#000;text-decoration:line-through">3</div>
<div class="t" style="left:690px;top:530px;font-size:13px;line-height:15px;font-weight:normal;color:#000;letter-spacing:-0.45px">28.07.2021</div>
<div class="b" style="left:760px;top:477px;width:10px;height:10px;border-radius:50%;background:#808080"></div>
<div class="t" style="left:775px;top:474px;font-size:13px;line-height:15px;font-weight:normal;color:#000;">Оплата пациентом</div>
<div class="t" style="left:775px;top:492px;font-size:13px;line-height:15px;font-weight:normal;color:#000;">Оплата из</div>
<div class="t" style="left:775px;top:506px;font-size:13px;line-height:15px;font-weight:normal;color:#000;">программы</div>
<div class="t" style="left:775px;top:524px;font-size:13px;line-height:15px;font-weight:normal;color:#000;">Оплата из</div>
<div class="t" style="left:775px;top:538px;font-size:13px;line-height:15px;font-weight:normal;color:#000;">программы</div>
<div class="t" style="left:953px;top:474px;font-size:13px;line-height:15px;font-weight:normal;color:#000;">600</div>
<div class="t" style="left:944px;top:530px;font-size:13px;line-height:15px;font-weight:normal;color:#000;">3 000</div>
<div class="b" style="left:274px;top:386px;width:98px;height:39px;border:4px solid #fd7c7c;border-radius:3px;box-sizing:border-box;box-shadow:inset 0 0 0 1px #fff"></div>
</body></html>
